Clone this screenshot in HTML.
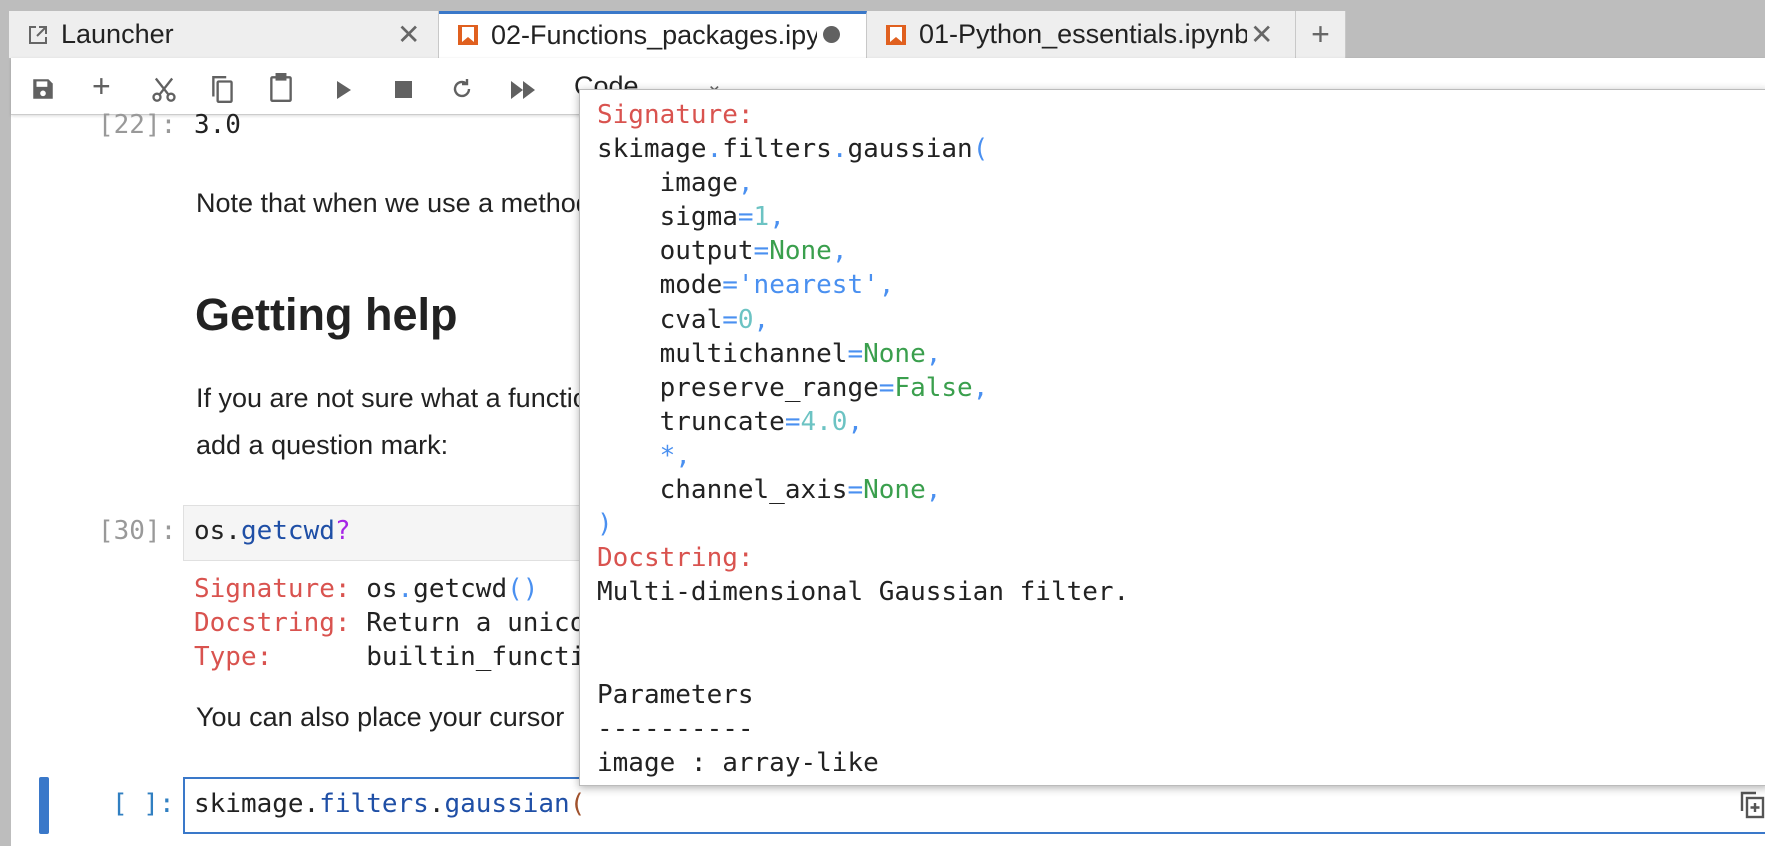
<!DOCTYPE html>
<html><head><meta charset="utf-8"><style>
*{margin:0;padding:0;box-sizing:border-box}
body{width:1765px;height:846px;overflow:hidden;background:#fff;position:relative;font-family:"Liberation Sans",sans-serif;color:#222}
.a{position:absolute;white-space:pre}
.m{font-family:"DejaVu Sans Mono","Liberation Mono",monospace;font-size:26px}
.tab{position:absolute;top:11px;height:47px;background:#eee;border-right:1px solid #c8c8c8;font-size:27px;line-height:47px}
.r{color:#d9534f}.g{color:#3a9f4d}.b{color:#4a90f0}.n{color:#6cc3c3}
.p{font-size:27px}
</style></head><body>
<div class="a" style="left:0;top:0;width:1765px;height:58px;background:#bdbdbd"></div>
<div class="a" style="left:0;top:58px;width:11px;height:788px;background:#bdbdbd"></div>
<div class="tab" style="left:9px;width:430px">
 <svg class="a" style="left:18px;top:13px" width="22" height="22" viewBox="0 0 22 22" fill="none" stroke="#666" stroke-width="2"><path d="M9 3H3v16h16v-6"/><path d="M12 3h7v7M19 3l-9 9"/></svg>
 <span class="a" style="left:52px;top:0">Launcher</span>
 <span class="a" style="left:388px;top:0;color:#666;font-size:28px">✕</span>
</div>
<div class="tab" style="left:439px;width:428px;background:#fff;border-top:3px solid #3a78c9;line-height:43px">
 <svg class="a" style="left:18px;top:10px" width="22" height="22" viewBox="0 0 22 22"><rect x="1" y="1" width="20" height="20" fill="#e0601f"/><path d="M5 3h12v15l-6-5-6 5z" fill="#fff"/></svg>
 <span class="a" style="left:52px;top:0;width:326px;overflow:hidden">02-Functions_packages.ipynb</span>
 <span class="a" style="left:384px;top:12px;width:17px;height:17px;border-radius:50%;background:#616161"></span>
</div>
<div class="tab" style="left:867px;width:429px">
 <svg class="a" style="left:18px;top:13px" width="22" height="22" viewBox="0 0 22 22"><rect x="1" y="1" width="20" height="20" fill="#e0601f"/><path d="M5 3h12v15l-6-5-6 5z" fill="#fff"/></svg>
 <span class="a" style="left:52px;top:0;width:328px;overflow:hidden">01-Python_essentials.ipynb</span>
 <span class="a" style="left:383px;top:0;color:#666;font-size:28px">✕</span>
</div>
<div class="tab" style="left:1296px;width:50px;text-align:center;color:#666;font-size:32px">+</div>
<div class="a" style="left:11px;top:58px;width:1754px;height:57px;background:#fff;border-bottom:1px solid #ccc;box-shadow:0 1px 3px rgba(0,0,0,.15)"></div>
<svg class="a" style="left:30px;top:76px" width="26" height="26" viewBox="0 0 24 24" fill="#616161"><path d="M3 3h14l4 4v14H3z"/><rect x="6" y="5" width="10" height="5" fill="#fff"/><circle cx="12" cy="16" r="2.6" fill="#fff"/></svg>
<div class="a" style="left:92px;top:68px;font-size:32px;color:#616161">+</div>
<svg class="a" style="left:150px;top:74px" width="28" height="30" viewBox="0 0 24 24" fill="none" stroke="#616161" stroke-width="2"><circle cx="6" cy="19" r="3"/><circle cx="18" cy="19" r="3"/><path d="M8 17L19 3M16 17L5 3"/></svg>
<svg class="a" style="left:210px;top:74px" width="26" height="30" viewBox="0 0 24 28" fill="none" stroke="#616161" stroke-width="2.2"><path d="M3 21V3h12"/><rect x="7" y="7" width="13" height="19" rx="1"/></svg>
<svg class="a" style="left:268px;top:73px" width="26" height="30" viewBox="0 0 24 28" fill="none" stroke="#616161" stroke-width="2.2"><rect x="3" y="4" width="18" height="22" rx="1"/><rect x="8" y="1" width="8" height="5" fill="#616161"/></svg>
<svg class="a" style="left:336px;top:80px" width="16" height="20" viewBox="0 0 16 20"><path d="M1 1l14 9-14 9z" fill="#616161"/></svg>
<div class="a" style="left:395px;top:81px;width:17px;height:17px;background:#616161"></div>
<svg class="a" style="left:450px;top:76px" width="24" height="26" viewBox="0 0 24 24" fill="none" stroke="#616161" stroke-width="2.4"><path d="M19 12a7 7 0 1 1-3-5.8"/><path d="M17 2v5h-5" /></svg>
<svg class="a" style="left:510px;top:80px" width="26" height="20" viewBox="0 0 26 20" fill="#616161"><path d="M1 1l12 9-12 9zM13 1l12 9-12 9z"/></svg>
<div class="a" style="left:574px;top:71px;font-size:27px">Code</div>
<div class="a" style="left:706px;top:72px;font-size:20px;color:#666">⌄</div>
<div class="a m" style="left:98px;top:110px;color:#999">[22]:</div>
<div class="a m" style="left:194px;top:110px">3.0</div>
<div class="a p" style="left:196px;top:188px">Note that when we use a method</div>
<div class="a" style="left:195px;top:289px;font-size:45px;font-weight:bold;color:#222">Getting help</div>
<div class="a p" style="left:196px;top:383px">If you are not sure what a function</div>
<div class="a p" style="left:196px;top:430px">add a question mark:</div>
<div class="a m" style="left:98px;top:516px;color:#999">[30]:</div>
<div class="a" style="left:183px;top:505px;width:420px;height:56px;background:#f5f5f5;border:1px solid #e0e0e0"></div>
<div class="a m" style="left:194px;top:516px">os.<span style="color:#1f4fa6">getcwd</span><span style="color:#a626e6">?</span></div>
<div class="a m" style="left:194px;top:572px;line-height:34px"><span class="r">Signature:</span> os<span class="b">.</span>getcwd<span class="b">()</span>
<span class="r">Docstring:</span> Return a unicode
<span class="r">Type:</span>      builtin_function</div>
<div class="a p" style="left:196px;top:702px">You can also place your cursor</div>
<div class="a" style="left:39px;top:777px;width:10px;height:57px;background:#3a78c9;border-radius:2px"></div>
<div class="a m" style="left:112px;top:789px;color:#307fc1">[ ]:</div>
<div class="a" style="left:183px;top:777px;width:1582px;height:57px;border:2px solid #3a78c9;border-right:none;background:#fff"></div>
<div class="a m" style="left:194px;top:789px">skimage.<span style="color:#1f4fa6">filters</span>.<span style="color:#1f4fa6">gaussian</span><span style="color:#a0522d">(</span></div>
<svg class="a" style="left:1740px;top:791px" width="25" height="28" viewBox="0 0 25 28" fill="none" stroke="#555" stroke-width="2.4"><path d="M2 20V2h14"/><rect x="7" y="7" width="16" height="19"/><path d="M15 12v9M10.5 16.5h9"/></svg>
<div class="a" style="left:579px;top:89px;width:1190px;height:697px;background:#fff;border:1px solid #bbb;box-shadow:0 2px 8px rgba(0,0,0,.3)"></div>
<div class="a m" style="left:597px;top:98px;line-height:34.1px"><span class="r">Signature:</span>
skimage<span class="b">.</span>filters<span class="b">.</span>gaussian<span class="b">(</span>
    image<span class="b">,</span>
    sigma<span class="b">=</span><span class="n">1</span><span class="b">,</span>
    output<span class="b">=</span><span class="g">None</span><span class="b">,</span>
    mode<span class="b">=</span><span class="b">'nearest'</span><span class="b">,</span>
    cval<span class="b">=</span><span class="n">0</span><span class="b">,</span>
    multichannel<span class="b">=</span><span class="g">None</span><span class="b">,</span>
    preserve_range<span class="b">=</span><span class="g">False</span><span class="b">,</span>
    truncate<span class="b">=</span><span class="n">4.0</span><span class="b">,</span>
    <span class="b">*,</span>
    channel_axis<span class="b">=</span><span class="g">None</span><span class="b">,</span>
<span class="b">)</span>
<span class="r">Docstring:</span>
Multi-dimensional Gaussian filter.


Parameters
----------
image : array-like</div>
</body></html>
